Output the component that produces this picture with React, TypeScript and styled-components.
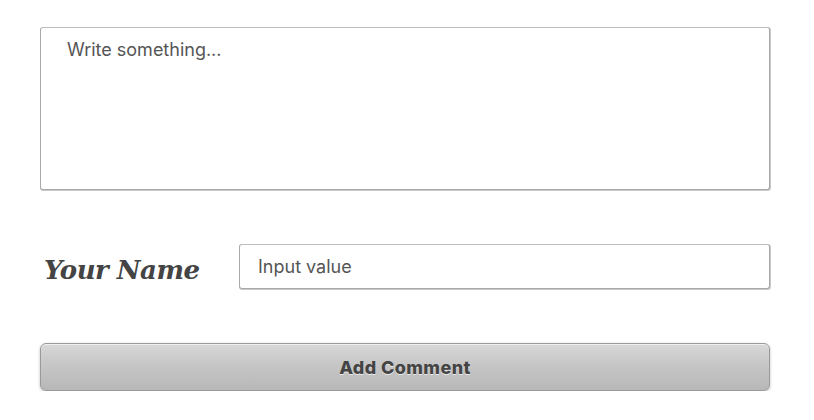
import React from "react";
import styled, { createGlobalStyle } from "styled-components";

const Global = createGlobalStyle`
  html, body { margin: 0; padding: 0; background: #ffffff; }
  body { font-family: Inter, Lato, sans-serif; }
`;

const Page = styled.div`
  width: 730px;
  padding: 27px 0 0 40px;
  display: flex;
  flex-direction: column;
  gap: 54px;
`;

const TextArea = styled.textarea`
  box-sizing: border-box;
  width: 730px;
  height: 163px;
  margin: 0;
  padding: 9px 26px;
  border: 1px solid #a9a9a9;
  border-top-color: #bdbdbd;
  border-radius: 3px;
  box-shadow: 0.5px 0.5px 0 0.5px #c8c8c8;
  font-family: Inter, Lato, sans-serif;
  font-size: 18px;
  line-height: 26px;
  color: #555;
  resize: none;
  outline: none;
  &::placeholder { color: #555; }
`;

const NameRow = styled.div`
  display: flex;
  align-items: center;
`;

const Label = styled.label`
  width: 199px;
  padding-left: 4px;
  box-sizing: border-box;
  font-family: "DejaVu Serif", Georgia, serif;
  font-style: italic;
  font-weight: bold;
  font-size: 26px;
  letter-spacing: -0.5px;
  color: #444;
  margin-top: 6px;
`;

const Input = styled.input`
  box-sizing: border-box;
  flex: 1;
  height: 45px;
  margin: 0;
  padding: 0 18px;
  border: 1px solid #a9a9a9;
  border-top-color: #bdbdbd;
  border-radius: 3px;
  box-shadow: 0.5px 0.5px 0 0.5px #c8c8c8;
  font-family: Inter, Lato, sans-serif;
  font-size: 18px;
  color: #555;
  outline: none;
  &::placeholder { color: #555; }
`;

const Button = styled.button`
  box-sizing: border-box;
  width: 730px;
  height: 48px;
  margin: 0;
  border: 1px solid #9a9a9a;
  border-radius: 6px;
  background: linear-gradient(#d8d8d8 0%, #c6c6c6 45%, #b8b8b8 100%);
  box-shadow: inset 0 1px 0 #f0f0f0, 0 1px 3px rgba(0, 0, 0, 0.25);
  font-family: Inter, Lato, sans-serif;
  font-weight: 800;
  font-size: 18px;
  letter-spacing: 0.4px;
  color: #444;
  text-shadow: 0 1px 0 #e8e8e8;
  cursor: pointer;
`;

export default function App() {
  return (
    <>
      <Global />
      <Page>
        <TextArea placeholder="Write something..." />
        <NameRow>
          <Label>Your Name</Label>
          <Input placeholder="Input value" />
        </NameRow>
        <Button>Add Comment</Button>
      </Page>
    </>
  );
}
